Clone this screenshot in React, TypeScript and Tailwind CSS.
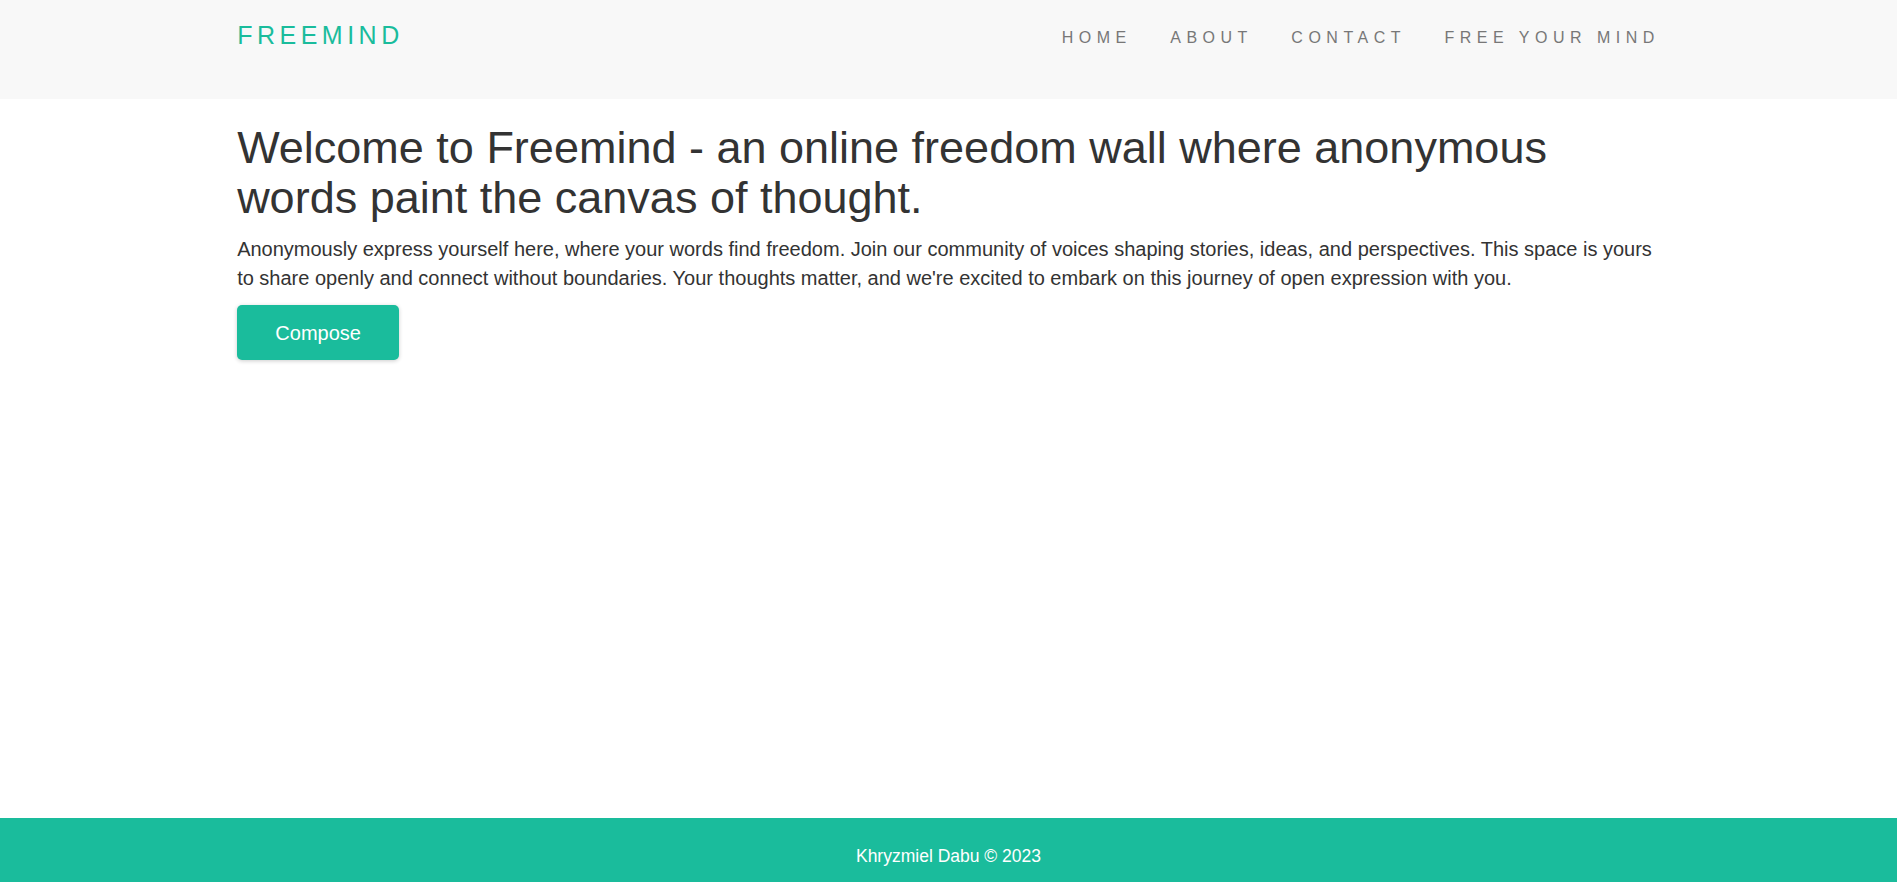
export default function App() {
  const links = ["HOME", "ABOUT", "CONTACT", "FREE YOUR MIND"];
  return (
    <div className="min-h-screen flex flex-col bg-white text-[#333] font-['Liberation_Sans',Arial,sans-serif]">
      <header className="bg-[#f8f8f8] h-[99px]">
        <div className="w-3/4 mx-auto flex justify-between items-start">
          <a className="mt-[23px] text-[25px] leading-[25px] tracking-[4.5px] text-[#1abc9c]">FREEMIND</a>
          <nav className="mt-[30px] flex gap-[38.5px]">
            {links.map((l) => (
              <a key={l} className="text-[16px] leading-[16px] tracking-[5.5px] text-[#777]">
                {l}
              </a>
            ))}
          </nav>
        </div>
      </header>
      <main className="w-3/4 mx-auto flex flex-col items-start">
        <h1 className="mt-[24px] text-[45px] leading-[1.1] font-normal">
          Welcome to Freemind - an online freedom wall where anonymous words paint the canvas of thought.
        </h1>
        <p className="mt-[13px] text-[20px] leading-[1.42857]">
          Anonymously express yourself here, where your words find freedom. Join our community of voices shaping stories, ideas, and perspectives. This space is yours to share openly and connect without boundaries. Your thoughts matter, and we're excited to embark on this journey of open expression with you.
        </p>
        <button className="mt-[13px] w-[162px] h-[55px] rounded-[5px] bg-[#1abc9c] text-white text-[20px] shadow-[0_1px_4px_rgba(0,0,0,0.2)]">
          Compose
        </button>
      </main>
      <footer className="mt-auto h-[64px] bg-[#1abc9c] text-white text-center pt-[26px] text-[17.5px] leading-[24px]">
        Khryzmiel Dabu © 2023
      </footer>
    </div>
  );
}
